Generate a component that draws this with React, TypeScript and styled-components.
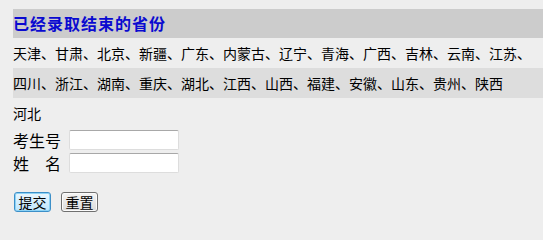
import React from "react";
import styled, { createGlobalStyle } from "styled-components";

const GlobalStyle = createGlobalStyle`
  html, body {
    margin: 0;
    padding: 0;
    background: #eeeeee;
  }
  body {
    font-family: "Noto Sans CJK SC", "Noto Sans", sans-serif;
    color: #000;
  }
`;

const Page = styled.div`
  padding: 9px 0 0 13px;
  width: 530px;
  height: 218px;
  overflow: hidden;
`;

const Title = styled.div`
  height: 29px;
  line-height: 29px;
  background: #cccccc;
  color: #0a0ad0;
  font-size: 16px;
  font-weight: bold;
  letter-spacing: 1px;
`;

const Row = styled.div<{ $shade?: boolean }>`
  height: 30px;
  line-height: 30px;
  font-size: 14px;
  white-space: nowrap;
  background: ${(p) => (p.$shade ? "#dddddd" : "transparent")};
`;

const Form = styled.form`
  margin-top: 2px;
`;

const Field = styled.div`
  display: flex;
  align-items: center;
  height: 20px;
  margin-bottom: 3px;
`;

const Label = styled.span`
  width: 56px;
  font-size: 16px;
  line-height: 20px;
  white-space: pre;
`;

const TextInput = styled.input`
  box-sizing: border-box;
  width: 110px;
  height: 20px;
  margin: 0;
  padding: 0 2px;
  border: 1px solid #dddddd;
  border-top-color: #a8a8a8;
  border-radius: 2px;
  background: #ffffff;
`;

const Actions = styled.div`
  display: flex;
  gap: 10px;
  margin-top: 19px;
  padding-left: 1px;
`;

const Btn = styled.button<{ $focus?: boolean }>`
  box-sizing: border-box;
  width: 37px;
  height: 20px;
  padding: 0;
  font-family: "Noto Sans CJK SC", sans-serif;
  font-size: 14px;
  line-height: 16px;
  color: #000;
  border-radius: 3px;
  border: 1px solid ${(p) => (p.$focus ? "#3c8fc8" : "#707070")};
  background: ${(p) =>
    p.$focus
      ? "linear-gradient(#eaf6fd, #bee6fd)"
      : "linear-gradient(#f4f4f4, #dcdcdc)"};
  box-shadow: ${(p) => (p.$focus ? "inset 0 0 0 1px #8cd2f5" : "inset 0 0 0 1px #fbfbfb")};
`;

const lines = [
  "天津、甘肃、北京、新疆、广东、内蒙古、辽宁、青海、广西、吉林、云南、江苏、",
  "四川、浙江、湖南、重庆、湖北、江西、山西、福建、安徽、山东、贵州、陕西",
  "河北",
];

export default function App() {
  return (
    <>
      <GlobalStyle />
      <Page>
        <Title>已经录取结束的省份</Title>
        {lines.map((text, i) => (
          <Row key={i} $shade={i % 2 === 1}>
            {text}
          </Row>
        ))}
        <Form onSubmit={(e) => e.preventDefault()}>
          <Field>
            <Label>考生号</Label>
            <TextInput type="text" />
          </Field>
          <Field>
            <Label>{"姓　名"}</Label>
            <TextInput type="text" />
          </Field>
          <Actions>
            <Btn type="submit" $focus>
              提交
            </Btn>
            <Btn type="reset">重置</Btn>
          </Actions>
        </Form>
      </Page>
    </>
  );
}
